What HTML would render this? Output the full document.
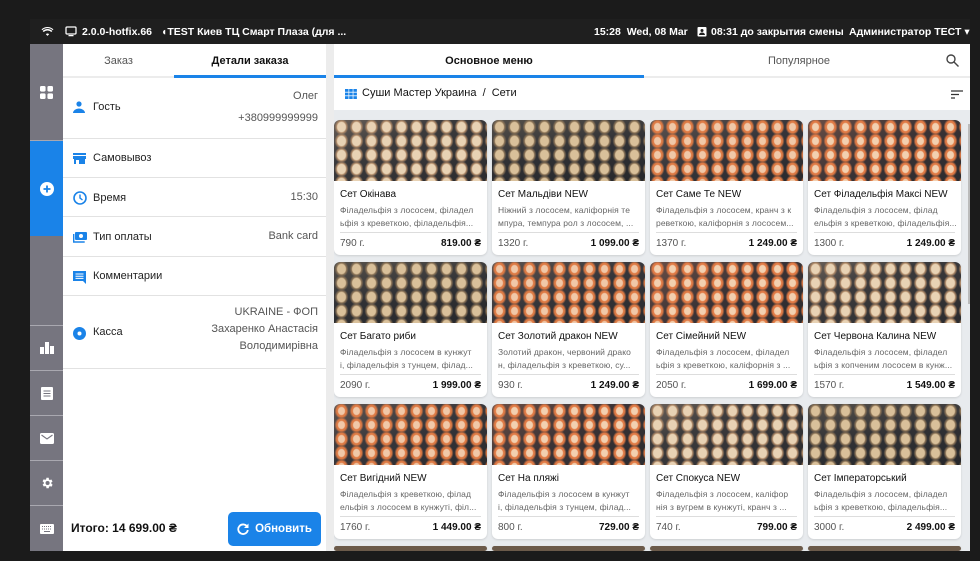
<!DOCTYPE html>
<html><head><meta charset="utf-8"><style>
*{box-sizing:border-box;margin:0;padding:0}
html,body{width:980px;height:561px;overflow:hidden}
body{background:#1b1b1b;font-family:"Liberation Sans","DejaVu Sans",sans-serif;position:relative}
svg{display:block}
.abs{position:absolute}
.top{left:30px;top:19px;width:940px;height:25px;background:#1f1f1f;color:#fff;font-size:10.5px;font-weight:bold}
.top span{position:absolute;top:7px;white-space:nowrap}
.side{left:30px;top:44px;width:33px;height:507px;background:#76757f}
.side .sec{position:absolute;left:0;width:33px;border-bottom:1px solid #a9a8b0;display:flex;align-items:center;justify-content:center}
.left{left:63px;top:44px;width:263px;height:507px;background:#fff}
.gap{left:326px;top:44px;width:8px;height:507px;background:#ececec}
.tab{position:absolute;top:0;height:33px;font-size:11px;display:flex;align-items:center;justify-content:center}
.row{position:absolute;left:0;width:263px;border-bottom:1px solid #e2e2e2;font-size:11px;color:#222}
.row .ic{position:absolute;left:10px}
.row .lb{position:absolute;left:30px}
.row .rv{position:absolute;right:8px;text-align:right;color:#555;line-height:20px}
.right{left:334px;top:44px;width:636px;height:507px;background:#e8ebee;overflow:hidden}
.card{position:absolute;width:153px;height:135px;background:#fff;border-radius:6px;overflow:hidden;box-shadow:0 1px 2px rgba(0,0,0,.12)}
.img{height:61px;background:#2f3033}
.t{position:absolute;left:6px;top:69px;font-size:10px;color:#111;white-space:nowrap}
.d{position:absolute;left:6px;top:84px;font-size:8.5px;color:#666;line-height:13px;white-space:nowrap;width:142px;overflow:hidden;letter-spacing:.1px}
.hr{position:absolute;left:6px;right:6px;top:112px;border-top:1px solid #ddd}
.w{position:absolute;left:6px;top:118px;font-size:10px;color:#555}
.p{position:absolute;right:6px;top:118px;font-size:10px;font-weight:bold;color:#111}
</style></head><body>
<div class="abs top">
<span style="left:11px;top:7px"><svg width="13" height="11" viewBox="0 0 24 20"><path d="M12 18l3-3a4 4 0 0 0-6 0zM5 11a10 10 0 0 1 14 0l2-2a13 13 0 0 0-18 0zM1 6a16 16 0 0 1 22 0l-1.5 1.5a14 14 0 0 0-19 0z" fill="#fff"/></svg></span>
<span style="left:35px;top:7px"><svg width="12" height="11" viewBox="0 0 24 22"><rect x="2" y="2" width="20" height="14" rx="2" fill="none" stroke="#fff" stroke-width="2.5"/><rect x="7" y="18" width="10" height="2.5" fill="#fff"/></svg></span>
<span style="left:52px">2.0.0-hotfix.66</span>
<span style="left:131px">◖TEST Киев ТЦ Смарт Плаза (для ...</span>
<span style="left:564px">15:28&nbsp; Wed, 08 Mar</span>
<span style="left:667px;top:7px"><svg width="10" height="11" viewBox="0 0 20 22"><rect x="1" y="2" width="18" height="19" rx="2" fill="#fff"/><circle cx="10" cy="9" r="3" fill="#1f1f1f"/><path d="M4 18a6 5 0 0 1 12 0z" fill="#1f1f1f"/></svg></span>
<span style="left:681px">08:31 до закрытия смены</span>
<span style="left:819px">Администратор ТЕСТ ▾</span>
</div>

<div class="abs side">
<div class="sec" style="top:0;height:97px"><svg width="13" height="13" viewBox="0 0 14 14" fill="#fff"><rect x="0" y="0" width="6" height="6" rx="1.5"/><rect x="8" y="0" width="6" height="6" rx="1.5"/><rect x="0" y="8" width="6" height="6" rx="1.5"/><rect x="8" y="8" width="6" height="6" rx="1.5"/></svg></div>
<div class="sec" style="top:97px;height:95px;background:#1a83e8;border:none"><svg width="14" height="14" viewBox="0 0 14 14"><circle cx="7" cy="7" r="7" fill="#fff"/><path d="M7 3.5v7M3.5 7h7" stroke="#1a83e8" stroke-width="1.8"/></svg></div>
<div class="sec" style="top:192px;height:90px"></div>
<div class="sec" style="top:282px;height:45px"><svg width="14" height="12" viewBox="0 0 14 12" fill="#fff"><rect x="0" y="5" width="4" height="7"/><rect x="5" y="0" width="4" height="12"/><rect x="10" y="4" width="4" height="8"/></svg></div>
<div class="sec" style="top:327px;height:45px"><svg width="12" height="13" viewBox="0 0 12 13"><rect width="12" height="13" rx="1" fill="#fff"/><path d="M2.5 4h7M2.5 6.5h7M2.5 9h7" stroke="#76757f" stroke-width="1.1"/></svg></div>
<div class="sec" style="top:372px;height:45px"><svg width="14" height="11" viewBox="0 0 14 11"><rect width="14" height="11" rx="1.5" fill="#fff"/><path d="M1.5 2l5.5 4 5.5-4" stroke="#76757f" stroke-width="1.1" fill="none"/></svg></div>
<div class="sec" style="top:417px;height:45px"><svg width="14" height="14" viewBox="0 0 24 24"><path fill="#fff" d="M19.4 13a7.5 7.5 0 0 0 0-2l2.1-1.6-2-3.5-2.5 1a7 7 0 0 0-1.7-1L15 3h-4l-.4 2.6a7 7 0 0 0-1.7 1l-2.5-1-2 3.5L6.6 11a7.5 7.5 0 0 0 0 2l-2.1 1.6 2 3.5 2.5-1a7 7 0 0 0 1.7 1L11 21h4l.4-2.6a7 7 0 0 0 1.7-1l2.5 1 2-3.5zM13 15.5a3.5 3.5 0 1 1 0-7 3.5 3.5 0 0 1 0 7z"/></svg></div>
<div class="sec" style="top:462px;height:45px;border:none"><svg width="14" height="10" viewBox="0 0 14 10"><rect width="14" height="10" rx="1" fill="#fff"/><path d="M2 2.5h10M2 5h10" stroke="#76757f" stroke-width="1" stroke-dasharray="1 1"/><path d="M4 7.5h6" stroke="#76757f" stroke-width="1"/></svg></div>
</div>

<div class="abs left">
<div class="tab" style="left:0;width:111px;color:#555">Заказ</div>
<div class="tab" style="left:111px;width:152px;color:#111;font-weight:bold">Детали заказа</div>
<div class="abs" style="left:0;top:32px;width:263px;height:2px;background:#ececec"></div>
<div class="abs" style="left:111px;top:31px;width:152px;height:3px;background:#1a83e8"></div>
<div class="row" style="top:33px;height:62px"><div class="ic" style="top:24px"><svg width="12" height="12" viewBox="0 0 12 12" fill="#1a83e8"><circle cx="6" cy="3" r="2.6"/><path d="M0 12a6 4.5 0 0 1 12 0z"/></svg></div><div class="lb" style="top:24px">Гость</div><div class="rv" style="top:9px">Олег<br><span style="display:block;margin-top:2px">+380999999999</span></div></div>
<div class="row" style="top:95px;height:39px"><div class="ic" style="top:14px"><svg width="13" height="11" viewBox="0 0 13 11" fill="#1a83e8"><rect x="0" y="0" width="13" height="2"/><rect x="0" y="3" width="13" height="3"/><rect x="1" y="6" width="11" height="5"/><rect x="3" y="7" width="3" height="4" fill="#fff"/></svg></div><div class="lb" style="top:13px">Самовывоз</div></div>
<div class="row" style="top:134px;height:39px"><div class="ic" style="top:13px"><svg width="14" height="14" viewBox="0 0 14 14"><circle cx="7" cy="7" r="6" fill="none" stroke="#1a83e8" stroke-width="1.6"/><path d="M7 3.5V7l2.5 2" stroke="#1a83e8" stroke-width="1.4" fill="none"/></svg></div><div class="lb" style="top:14px">Время</div><div class="rv" style="top:9px">15:30</div></div>
<div class="row" style="top:173px;height:40px"><div class="ic" style="top:15px"><svg width="14" height="11" viewBox="0 0 14 11"><rect x="2" y="0" width="12" height="8" rx="1" fill="#1a83e8"/><circle cx="8" cy="4" r="2" fill="#fff"/><path d="M0.7 2v8h11" stroke="#1a83e8" stroke-width="1.4" fill="none"/></svg></div><div class="lb" style="top:14px">Тип оплаты</div><div class="rv" style="top:9px">Bank card</div></div>
<div class="row" style="top:213px;height:39px"><div class="ic" style="top:14px"><svg width="13" height="13" viewBox="0 0 13 13"><path d="M0 0h13v13l-3-3H0z" fill="#1a83e8"/><path d="M2.5 3h8M2.5 5.2h8M2.5 7.4h8" stroke="#fff" stroke-width="1"/></svg></div><div class="lb" style="top:13px">Комментарии</div></div>
<div class="row" style="top:252px;height:73px"><div class="ic" style="top:31px"><svg width="13" height="13" viewBox="0 0 13 13"><circle cx="6.5" cy="6.5" r="6.5" fill="#1a83e8"/><circle cx="6.5" cy="6.5" r="2" fill="#fff"/></svg></div><div class="lb" style="top:30px">Касса</div><div class="rv" style="top:8px;line-height:17px">UKRAINE - ФОП<br>Захаренко Анастасія<br>Володимирівна</div></div>
<div class="abs" style="left:8px;top:477px;font-size:12px;font-weight:bold;color:#111">Итого: 14 699.00 ₴</div>
<div class="abs" style="left:165px;top:468px;width:93px;height:34px;background:#1a83e8;border-radius:5px;color:#fff;font-size:11.5px;font-weight:bold;display:flex;align-items:center;justify-content:center;gap:6px"><svg width="12" height="12" viewBox="0 0 12 12"><path d="M10 3.5A4.8 4.8 0 1 0 10.8 7" stroke="#fff" stroke-width="1.8" fill="none"/><path d="M11.5 0.5v4.5H7z" fill="#fff"/></svg>Обновить</div>
</div>
<div class="abs gap"></div>

<div class="abs right">
<div class="abs" style="left:0;top:0;width:636px;height:66px;background:#fff"></div>
<div class="tab" style="left:0;width:310px;color:#111;font-weight:bold">Основное меню</div>
<div class="tab" style="left:310px;width:310px;color:#555">Популярное</div>
<div class="abs" style="left:612px;top:10px"><svg width="13" height="13" viewBox="0 0 13 13"><circle cx="5" cy="5" r="4" fill="none" stroke="#444" stroke-width="1.4"/><path d="M8 8l4.5 4.5" stroke="#444" stroke-width="1.4"/></svg></div>
<div class="abs" style="left:0;top:32px;width:636px;height:2px;background:#ececec"></div>
<div class="abs" style="left:0;top:31px;width:310px;height:3px;background:#1a83e8"></div>
<div class="abs" style="left:11px;top:45px"><svg width="12" height="10" viewBox="0 0 12 10" fill="#1a83e8"><rect x="0" y="0" width="3.5" height="2.8"/><rect x="4.2" y="0" width="3.5" height="2.8"/><rect x="8.4" y="0" width="3.5" height="2.8"/><rect x="0" y="3.6" width="3.5" height="2.8"/><rect x="4.2" y="3.6" width="3.5" height="2.8"/><rect x="8.4" y="3.6" width="3.5" height="2.8"/><rect x="0" y="7.2" width="3.5" height="2.8"/><rect x="4.2" y="7.2" width="3.5" height="2.8"/><rect x="8.4" y="7.2" width="3.5" height="2.8"/></svg></div>
<div class="abs" style="left:28px;top:43px;font-size:11px;color:#111">Суши Мастер Украина &nbsp;/&nbsp; Сети</div>
<div class="abs" style="left:617px;top:46px"><svg width="12" height="9" viewBox="0 0 12 9"><path d="M0 1h12M0 4.5h8M0 8h4" stroke="#333" stroke-width="1.3"/></svg></div>
<div class="abs" style="left:634px;top:80px;width:2px;height:180px;background:#bbb"></div>
<div id="g"></div>
</div>
<script>
var D=[
["Сет Окінава","Філадельфія з лососем, філадел","ьфія з креветкою, філадельфія...","790 г.","819.00 ₴"],
["Сет Мальдіви NEW","Ніжний з лососем, каліфорнія те","мпура, темпура рол з лососем, ...","1320 г.","1 099.00 ₴"],
["Сет Саме Те NEW","Філадельфія з лососем, кранч з к","реветкою, каліфорнія з лососем...","1370 г.","1 249.00 ₴"],
["Сет Філадельфія Максі NEW","Філадельфія з лососем, філад","ельфія з креветкою, філадельфія...","1300 г.","1 249.00 ₴"],
["Сет Багато риби","Філадельфія з лососем в кунжут","і, філадельфія з тунцем, філад...","2090 г.","1 999.00 ₴"],
["Сет Золотий дракон NEW","Золотий дракон, червоний драко","н, філадельфія з креветкою, су...","930 г.","1 249.00 ₴"],
["Сет Сімейний NEW","Філадельфія з лососем, філадел","ьфія з креветкою, каліфорнія з ...","2050 г.","1 699.00 ₴"],
["Сет Червона Калина NEW","Філадельфія з лососем, філадел","ьфія з копченим лососем в кунж...","1570 г.","1 549.00 ₴"],
["Сет Вигідний NEW","Філадельфія з креветкою, філад","ельфія з лососем в кунжуті, філ...","1760 г.","1 449.00 ₴"],
["Сет На пляжі","Філадельфія з лососем в кунжут","і, філадельфія з тунцем, філад...","800 г.","729.00 ₴"],
["Сет Спокуса NEW","Філадельфія з лососем, каліфор","нія з вугрем в кунжуті, кранч з ...","740 г.","799.00 ₴"],
["Сет Імператорський","Філадельфія з лососем, філадел","ьфія з креветкою, філадельфія...","3000 г.","2 499.00 ₴"]];
var bgs=[
"radial-gradient(ellipse 6px 7px,#e8d2b4 0 4px,#b08a68 5px,transparent 7px) 0 0/15px 14px,linear-gradient(160deg,#6a6058 0%,#3b3a3c 35%,#2b2b2e 100%)",
"radial-gradient(ellipse 6px 7px,#d9c09a 0 4px,#8d7558 5px,transparent 7px) 0 0/15px 14px,linear-gradient(170deg,#55504a,#303135 50%,#26272a)",
"radial-gradient(ellipse 6px 7px,#f0c8a8 0 3px,#dd7a44 4px 5px,transparent 7px) 0 0/15px 14px,linear-gradient(160deg,#5e5450,#35353a 50%,#2a2a2d)",
"radial-gradient(ellipse 6px 7px,#f2d0b0 0 3px,#e07a45 4px 5px,transparent 7px) 0 0/15px 14px,linear-gradient(150deg,#6b4f46,#3a3336 50%,#2b2b2e)"];
var h="";for(var i=0;i<12;i++){var c=i%4,r=Math.floor(i/4);var x=c*158,y=76+r*142;var d=D[i];
h+='<div class="card" style="left:'+x+'px;top:'+y+'px"><div class="img" style="background:'+bgs[(i+r)%4]+'"></div><div class="t">'+d[0]+'</div><div class="d">'+d[1]+'<br>'+d[2]+'</div><div class="hr"></div><div class="w">'+d[3]+'</div><div class="p">'+d[4]+'</div></div>';}
for(var c=0;c<4;c++)h+='<div class="card" style="left:'+(c*158)+'px;top:502px;height:5px"><div class="img" style="background:#6b5a4a"></div></div>';
document.getElementById("g").innerHTML=h;
</script>
</body></html>
